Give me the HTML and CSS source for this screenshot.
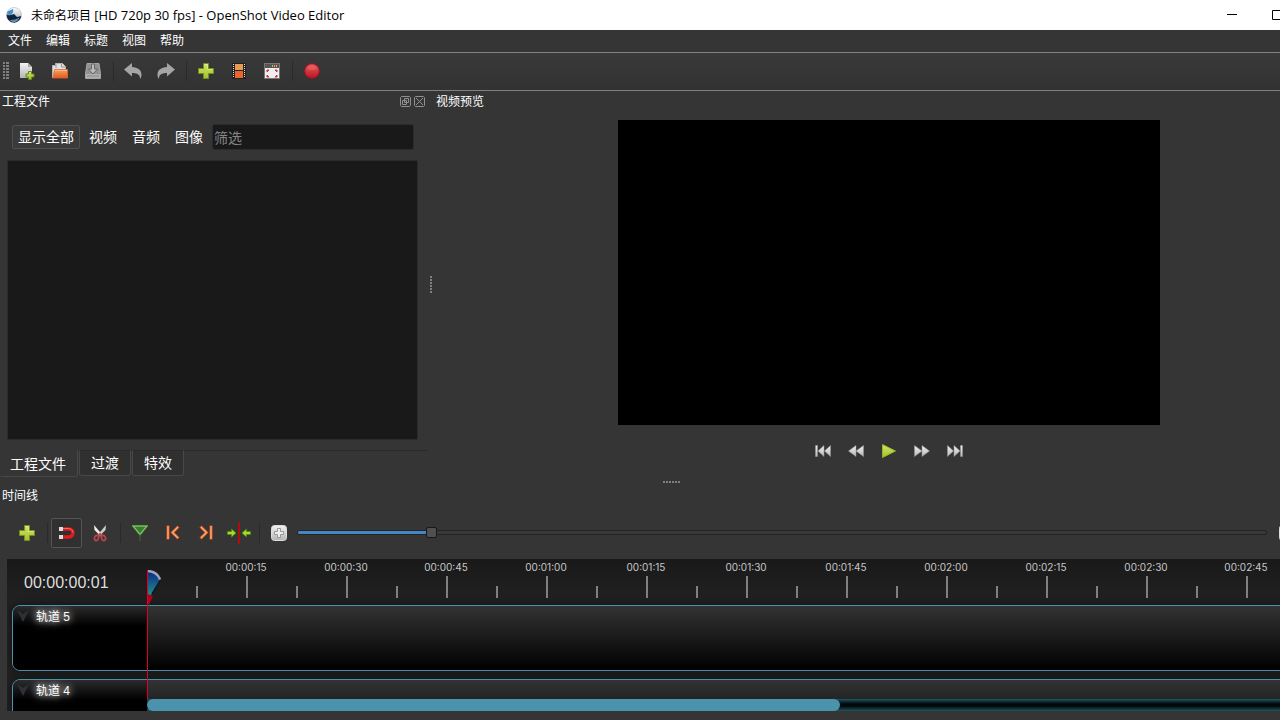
FILE: index.html
```
<!DOCTYPE html>
<html lang="zh-CN">
<head>
  <meta charset="UTF-8">
  <meta name="viewport" content="width=device-width, initial-scale=1.0">
  <title>OpenShot Video Editor</title>
  <link rel="stylesheet" href="styles.css">
</head>
<body>

<!-- Shared gradients and icons -->
<svg class="defs" width="0" height="0" aria-hidden="true">
  <defs>
    <linearGradient id="green" x1="0" y1="0" x2="0" y2="1"><stop offset="0" stop-color="#d3e56a"/><stop offset="1" stop-color="#a2c02c"/></linearGradient>
    <linearGradient id="orange" x1="0" y1="0" x2="0" y2="1"><stop offset="0" stop-color="#f0a860"/><stop offset="1" stop-color="#e9541c"/></linearGradient>
    <linearGradient id="silver" x1="0" y1="0" x2="0" y2="1"><stop offset="0" stop-color="#f2f2f2"/><stop offset="1" stop-color="#b5b5b5"/></linearGradient>
    <linearGradient id="red" x1="0" y1="0" x2="0" y2="1"><stop offset="0" stop-color="#ea5a56"/><stop offset="1" stop-color="#bd1328"/></linearGradient>
    <linearGradient id="blue" x1="0" y1="0" x2="0" y2="1"><stop offset="0" stop-color="#0a2a80"/><stop offset="1" stop-color="#1f8f90"/></linearGradient>
    <linearGradient id="sphere" x1="0" y1="0" x2="0" y2="1"><stop offset="0" stop-color="#ffffff"/><stop offset="1" stop-color="#9aa0a6"/></linearGradient>
    <symbol id="plus" viewBox="0 0 16 16"><path d="M5.5.5h5v5h5v5h-5v5h-5v-5h-5v-5h5z" fill="url(#green)" stroke="#71911c"/><path d="M6.5 1.5h3v5h5" fill="none" stroke="#e2ef90" stroke-opacity=".7"/></symbol>
  </defs>
</svg>

<div class="app">
  <header class="titlebar">
    <svg class="logo" width="16" height="16" viewBox="0 0 16 16">
      <circle cx="8" cy="8" r="7.500" fill="url(#sphere)" stroke="#aab0b6" stroke-width=".6"/>
      <path d="M.6 7.500Q4 9 8 7L11 10 15.200 9A7.400 7.400 0 0 1 2 12.500Q.6 10.500.6 7.500z" fill="#11233b"/>
      <path d="M1.500 4.500L7 2Q8 5 5 8L1 7.500z" fill="#3d8fd0"/>
      <path d="M3.500 13Q9 13.500 13.500 10.500Q12 14.500 8 15.200 5.500 15 3.500 13z" fill="#5d93bd"/>
    </svg>
    <h1>未命名项目 <span>[HD 720p 30 fps] - OpenShot Video Editor</span></h1>
    <div class="window-buttons">
      <button aria-label="最小化"><svg width="10" height="10"><path d="M0 4.500h10" stroke="#000"/></svg></button>
      <button aria-label="最大化"><svg width="10" height="10"><path d="M.5.5h9v9h-9z" fill="none" stroke="#000"/></svg></button>
      <button aria-label="关闭"><svg width="10" height="10"><path d="M0 0l10 10M10 0L0 10" stroke="#000"/></svg></button>
    </div>
  </header>

  <nav class="menubar">
    <button>文件</button>
    <button>编辑</button>
    <button>标题</button>
    <button>视图</button>
    <button>帮助</button>
  </nav>

  <div class="toolbar main-toolbar">
    <span class="handle"></span>
    <button class="tool" aria-label="新建项目">
      <svg width="16" height="18" viewBox="0 0 16 18"><path d="M1 1h8l4 4v11H1z" fill="url(#silver)"/><path d="M9 1v4h4z" fill="#aaa"/><path d="M9.500 9.500h3v2.500h2.500v3h-2.500v2.500h-3v-2.500H7v-3h2.500z" fill="url(#green)" stroke="#64851a"/></svg>
    </button>
    <button class="tool" aria-label="打开项目">
      <svg width="16" height="16" viewBox="0 0 16 16"><path d="M.5 15V2.500h3V.5h7l3 3V8" fill="#e0e0e0" stroke="#b5b5b5"/><path d="M4 1v4M9.500 1v3h3.500" fill="none" stroke="#999"/><path d="M2.500 6.500h13V15H1z" fill="url(#orange)" stroke="#e0683a" stroke-width=".8"/><path d="M3 7.500h12" stroke="#f8ba8e"/></svg>
    </button>
    <button class="tool" aria-label="保存项目">
      <svg width="16" height="16" viewBox="0 0 16 16"><path d="M2 .5h12l1.500 10v5H.5v-5z" fill="#929292" stroke="#a5a5a5"/><path d="M1 11h14v4H1z" fill="#b0b0b0"/><path d="M6.500 1h3v5h3L8 11 3.500 6h3z" fill="#bcbcbc" stroke="#666"/><path d="M2 13h12" stroke="#888"/></svg>
    </button>
    <span class="separator"></span>
    <button class="tool" aria-label="撤销">
      <svg width="18" height="16" viewBox="0 0 18 16"><path d="M0 6.500L8 0v4c6 .5 9.500 3 9.500 7.500 0 2-.7 3.500-1.500 4.500.3-4-2.500-6-8-6v3.500z" fill="#a5a5a5"/></svg>
    </button>
    <button class="tool" aria-label="重做">
      <svg width="18" height="16" viewBox="0 0 18 16"><path d="M18 6.500L10 0v4C4 4.500.5 7 .5 11.500c0 2 .7 3.500 1.500 4.500-.3-4 2.500-6 8-6v3.500z" fill="#a5a5a5"/></svg>
    </button>
    <span class="separator"></span>
    <button class="tool" aria-label="导入文件"><svg width="16" height="16"><use href="#plus"/></svg></button>
    <button class="tool" aria-label="选择配置">
      <svg width="14" height="16" viewBox="0 0 14 16"><path d="M0 0h14v16H0z" fill="#222"/><path d="M3 1h8v6H3z" fill="#e99a50"/><path d="M3 8h8v7H3z" fill="#e8682c"/><path d="M1.500 1v14M12.500 1v14" stroke="#ddd" stroke-dasharray="1 1"/></svg>
    </button>
    <button class="tool" aria-label="全屏">
      <svg width="16" height="16" viewBox="0 0 16 16"><path d="M.5.5h15v15H.5z" fill="#eee" stroke="#777"/><path d="M1 1h14v4H1z" fill="#565656"/><path d="M8 3h6" stroke="#e6ae54" stroke-width="2" stroke-dasharray="1 1"/><path d="M3 9V7h2zM11 7h2v2zM3 12v2h2zM13 12v2h-2z" fill="#c9343e" stroke="#c9343e"/></svg>
    </button>
    <span class="separator"></span>
    <button class="tool" aria-label="导出视频">
      <svg width="16" height="16" viewBox="0 0 16 16"><circle cx="8" cy="8" r="7.300" fill="url(#red)" stroke="#a51224"/><path d="M3 6a5.500 5 0 0 1 10 0Q8 8.500 3 6z" fill="#fff" opacity=".12"/></svg>
    </button>
  </div>

  <main class="docks">
    <section class="files-dock">
      <div class="dock-title">
        <h2>工程文件</h2>
        <button aria-label="浮动"><svg width="11" height="11" viewBox="0 0 11 11"><path d="M1.500.5h8l1 1v8l-1 1h-8l-1-1v-8z M4.500 2.500h4v4h-4z M2.500 4.500h4v4h-4z" fill="none" stroke="#909090"/></svg></button>
        <button aria-label="关闭面板"><svg width="11" height="11" viewBox="0 0 11 11"><path d="M1.500.5h8l1 1v8l-1 1h-8l-1-1v-8z M2 2l7 7M9 2l-7 7" fill="none" stroke="#909090"/></svg></button>
      </div>
      <div class="filters">
        <button class="filter active">显示全部</button>
        <button class="filter">视频</button>
        <button class="filter">音频</button>
        <button class="filter">图像</button>
        <input type="text" placeholder="筛选" aria-label="筛选">
      </div>
      <div class="file-list"></div>
      <div class="tabs">
        <button class="tab active">工程文件</button>
        <button class="tab">过渡</button>
        <button class="tab">特效</button>
      </div>
    </section>

    <div class="splitter vertical"><span></span></div>

    <section class="preview-dock">
      <div class="dock-title"><h2>视频预览</h2></div>
      <div class="stage"><div class="video"></div></div>
      <div class="playback">
        <button class="tool" aria-label="跳到开头"><svg width="16" height="12" viewBox="0 0 16 12"><path d="M.5.5h2v11h-2zM9 .5v11L3 6zM15.500.5v11L9.500 6z" fill="url(#silver)" stroke="#999" stroke-width=".5"/></svg></button>
        <button class="tool" aria-label="快退"><svg width="16" height="12" viewBox="0 0 16 12"><path d="M8 .5v11L.5 6zM15.500.5v11L8 6z" fill="url(#silver)" stroke="#999" stroke-width=".5"/></svg></button>
        <button class="tool" aria-label="播放"><svg width="14" height="14" viewBox="0 0 14 14"><path d="M.5.5L13.500 7 .5 13.500z" fill="url(#green)" stroke="#93b51e"/></svg></button>
        <button class="tool" aria-label="快进"><svg width="16" height="12" viewBox="0 0 16 12"><path d="M8 .5v11L15.500 6zM.5.5v11L8 6z" fill="url(#silver)" stroke="#999" stroke-width=".5"/></svg></button>
        <button class="tool" aria-label="跳到结尾"><svg width="16" height="12" viewBox="0 0 16 12"><path d="M13.500.5h2v11h-2zM7 .5v11L13 6zM.5.5v11L6.500 6z" fill="url(#silver)" stroke="#999" stroke-width=".5"/></svg></button>
      </div>
    </section>
  </main>

  <div class="splitter horizontal"><span></span></div>

  <section class="timeline-dock">
    <div class="dock-title"><h2>时间线</h2></div>

    <div class="toolbar timeline-toolbar">
      <button class="tool" aria-label="添加轨道"><svg width="16" height="16"><use href="#plus"/></svg></button>
      <span class="separator"></span>
      <button class="tool pressed" aria-label="启用吸附">
        <svg width="16" height="12" viewBox="0 0 16 12"><path d="M0 2h10a4 4 0 0 1 0 8H0" fill="none" stroke="#df1c20" stroke-width="3.500"/><path d="M0 1.500h9a4.500 4.500 0 0 1 5 4" fill="none" stroke="#f66" stroke-width="1"/><path d="M0 0h4v4H0zM0 8h4v4H0z" fill="#ddd"/></svg>
      </button>
      <button class="tool" aria-label="剃刀工具">
        <svg width="14" height="18" viewBox="0 0 14 18"><path d="M1 1l8.500 10-1.500 1.500L1.500 6z" fill="#eee"/><path d="M13 1L4.500 11l1.500 1.500L12.500 6z" fill="#ccc"/><g fill="none" stroke="#b8434a" stroke-width="1.800"><ellipse cx="3.500" cy="14" rx="1.900" ry="2.600" transform="rotate(25 3.500 14)"/><ellipse cx="10.500" cy="14" rx="1.900" ry="2.600" transform="rotate(-25 10.500 14)"/><path d="M5 12l2-2 2 2"/></g></svg>
      </button>
      <span class="separator"></span>
      <button class="tool" aria-label="添加标记">
        <svg width="16" height="16" viewBox="0 0 16 16"><path d="M1 1h14L8 9.500z" fill="#347f2f" stroke="#78bd59" stroke-width="1.500"/><path d="M8 9v7" stroke="#3f6f2d"/></svg>
      </button>
      <button class="tool" aria-label="上一个标记">
        <svg width="14" height="15" viewBox="0 0 14 15"><path d="M2 .5v14M12.500 1.500L6.500 7.500l6 6" fill="none" stroke="#d4531c" stroke-width="3"/><path d="M2 1v13M12 2L6.500 7.500 12 13" fill="none" stroke="#f5b07c" stroke-width="1.400"/></svg>
      </button>
      <button class="tool" aria-label="下一个标记">
        <svg width="14" height="15" viewBox="0 0 14 15"><path d="M12 .5v14M1.500 1.500l6 6-6 6" fill="none" stroke="#d4531c" stroke-width="3"/><path d="M12 1v13M2 2l5.500 5.500L2 13" fill="none" stroke="#f5b07c" stroke-width="1.400"/></svg>
      </button>
      <button class="tool" aria-label="播放头居中">
        <svg width="24" height="22" viewBox="0 0 24 22"><path d="M12 0v22" stroke="#b00d0d" stroke-width="2"/><path d="M.5 9.500h4V7L9 11l-4.500 4v-2.500h-4zM23.500 9.500h-4V7L15 11l4.500 4v-2.500h4z" fill="#a6dc24" stroke="#4d8a10" stroke-width=".7"/></svg>
      </button>
      <span class="separator"></span>
      <button class="tool" aria-label="放大">
        <svg width="16" height="16" viewBox="0 0 16 16"><rect x=".5" y=".5" width="15" height="15" rx="3" fill="url(#silver)" stroke="#ddd"/><path d="M6.500 3.500h3v3h3v3h-3v3h-3v-3h-3v-3h3z" fill="#eee" stroke="#999"/></svg>
      </button>
      <input class="zoom" type="range" min="0" max="1000" value="134" aria-label="缩放">
      <button class="tool" aria-label="缩小">
        <svg width="16" height="16" viewBox="0 0 16 16"><rect x=".5" y=".5" width="15" height="15" rx="3" fill="url(#silver)" stroke="#ddd"/><path d="M3.500 6.500h9v3h-9z" fill="#eee" stroke="#999"/></svg>
      </button>
    </div>

    <div class="timeline">
      <div class="ruler-row">
        <div class="timecode">00:00:00:01</div>
        <div class="ruler">
          <span>00:00:15</span>
          <span>00:00:30</span>
          <span>00:00:45</span>
          <span>00:01:00</span>
          <span>00:01:15</span>
          <span>00:01:30</span>
          <span>00:01:45</span>
          <span>00:02:00</span>
          <span>00:02:15</span>
          <span>00:02:30</span>
          <span>00:02:45</span>
        </div>
      </div>
      <div class="track">
        <div class="track-name">
          <svg width="14" height="14" viewBox="0 0 14 14"><path d="M1 1l6 4 6-4-6 12z" fill="#2c3238"/></svg>
          <span>轨道 5</span>
        </div>
        <div class="track-lane"></div>
      </div>
      <div class="track">
        <div class="track-name">
          <svg width="14" height="14" viewBox="0 0 14 14"><path d="M1 1l6 4 6-4-6 12z" fill="#2c3238"/></svg>
          <span>轨道 4</span>
        </div>
        <div class="track-lane"></div>
      </div>
      <div class="playhead">
        <svg width="13" height="35" viewBox="0 0 13 35"><path d="M0 1Q9 1 12 10L3 25H0z" fill="url(#blue)"/><path d="M12.500 10L4 24" stroke="#101820" stroke-width="1.500"/><path d="M0 1Q9 1.500 12 9.500" fill="none" stroke="#a0a2b8" stroke-width="2.500"/><path d="M0 24l5 2-3.500 8H0z" fill="#b00020"/></svg>
      </div>
      <div class="scrollbar"><span></span></div>
    </div>
  </section>
</div>

</body>
</html>
```

FILE: styles.css
```
* {
  margin: 0;
  padding: 0;
  box-sizing: border-box;
}
body {
  font-family: "Open Sans", "Noto Sans CJK SC", sans-serif;
  font-size: 12px;
  line-height: 16px;
  color: #fff;
  background: #353535;
  overflow: hidden;
}
button {
  font: inherit;
  color: inherit;
  background: none;
  border: none;
}
svg {
  display: block;
}
h1, h2 {
  font-size: 12px;
  font-weight: 400;
}
.defs {
  position: absolute;
}

/* the window runs past the right edge of the screen */
.app {
  display: flex;
  flex-direction: column;
  width: calc(100% + 64px);
  height: 100vh;
}

/* Title bar and menu */
.titlebar {
  display: flex;
  align-items: center;
  height: 30px;
  padding-left: 6px;
  gap: 9px;
  background: #fff;
  color: #000;
}
.titlebar h1 span {
  font-size: 13px;
}
.window-buttons {
  display: flex;
  margin-left: auto;
}
.window-buttons button {
  display: flex;
  justify-content: center;
  width: 45px;
}
.menubar {
  display: flex;
  align-items: center;
  height: 23px;
  padding-left: 8px;
  gap: 14px;
  border-bottom: 1px solid #808080;
}

/* Toolbars */
.toolbar {
  display: flex;
  align-items: center;
}
.main-toolbar {
  height: 38px;
  padding-bottom: 1px;
  border-bottom: 1px solid #808080;
  background: linear-gradient(#393939, #323232);
}
.handle {
  width: 6px;
  height: 18px;
  margin: 0 1px 0 3px;
  background: conic-gradient(#353535 25%, #353535 0 50%, #353535 0 75%, #808080 0) 0 0 / 3px 3px;
  background: linear-gradient(#353535, #353535) 2px 0 / 1px 100% no-repeat, repeating-linear-gradient(#808080 0 2px, #353535 2px 3px);
}
.tool {
  display: flex;
  flex: none;
  align-items: center;
  justify-content: center;
  width: 33px;
  height: 30px;
}
.pressed {
  border: 1px solid #555;
  border-radius: 2px;
  background: #303030;
  width: 31px;
  margin: 0 1px;
}
.separator {
  width: 7px;
  height: 20px;
  background: linear-gradient(#2a2a2a, #2a2a2a) 4px 0 / 1px 100% no-repeat;
}

/* Docks */
.docks {
  display: flex;
  flex: 1;
  min-height: 0;
}
.dock-title {
  display: flex;
  align-items: center;
  height: 21px;
  padding: 0 3px 0 2px;
  gap: 3px;
}
.dock-title h2 {
  flex: 1;
}
.files-dock {
  display: flex;
  flex-direction: column;
  width: 428px;
  font-size: 14px;
}
.filters {
  display: flex;
  align-items: center;
  gap: 3px;
  padding: 12px 14px 10px 12px;
}
.filter {
  height: 24px;
  padding: 0 5px;
  border: 1px solid transparent;
  border-radius: 2px;
  line-height: 22px;
}
.filter.active {
  border-color: #505050;
  background: #3a3a3a;
}
.filters input {
  flex: 1;
  min-width: 0;
  height: 26px;
  padding: 0 1px;
  border: 1px solid #2b2b2b;
  border-radius: 3px;
  background: #191919;
  color: #fff;
  font: inherit;
}
.filters input::placeholder {
  color: #858585;
}
.file-list {
  flex: 1;
  margin: 0 10px 10px 7px;
  border: 1px solid #2b2b2b;
  background: #191919;
}
.tabs {
  display: flex;
  align-items: flex-start;
  gap: 1px;
  height: 29px;
  background: linear-gradient(#2a2a2a, #2a2a2a) 0 0 / 100% 1px no-repeat;
}
.tab {
  height: 26px;
  padding: 0 11px;
  border: 1px solid #484848;
  border-top-color: #2a2a2a;
  border-radius: 0 0 3px 3px;
  background: #303030;
}
.tab.active {
  height: 27px;
  padding: 2px 11px 0 10px;
  border-left: none;
  border-top: none;
  background: #353535;
}
.splitter {
  display: flex;
  align-items: center;
  justify-content: center;
}
.vertical {
  width: 6px;
}
.vertical span {
  width: 2px;
  height: 18px;
  background: repeating-linear-gradient(#808080 0 2px, #353535 2px 3px);
}
.horizontal {
  height: 6px;
}
.horizontal span {
  width: 18px;
  height: 2px;
  background: repeating-linear-gradient(90deg, #808080 0 2px, #353535 2px 3px);
}
.preview-dock {
  display: flex;
  flex: 1;
  flex-direction: column;
  min-width: 0;
}
.stage {
  display: flex;
  flex: 1;
  justify-content: center;
  min-height: 0;
  margin-top: 8px;
}
.video {
  height: 100%;
  aspect-ratio: 16 / 9;
  background: #000;
}
.playback {
  display: flex;
  align-items: center;
  justify-content: center;
  height: 51px;
  margin-bottom: 3px;
}

/* Timeline */
.timeline-dock {
  padding-bottom: 9px;
}
.timeline-toolbar {
  height: 53px;
  padding: 0 41px 0 10px;
}
.zoom {
  appearance: none;
  flex: 1;
  height: 17px;
  margin: 0 3px 0 2px;
  background: none;
}
.zoom::-webkit-slider-runnable-track {
  height: 5px;
  border: 1px solid #252525;
  border-radius: 2px;
  background: linear-gradient(#4486c4, #4486c4) 0 0 / 14% 100% no-repeat #393939;
}
.zoom::-webkit-slider-thumb {
  appearance: none;
  width: 11px;
  height: 11px;
  margin-top: -4px;
  border: 1px solid #181818;
  border-radius: 2px;
  background: #505050;
}
.timeline {
  position: relative;
  height: 152px;
  margin-left: 7px;
  overflow: hidden;
  background: #212121;
  font-family: "Liberation Sans", "Noto Sans CJK SC", sans-serif;
}
.ruler-row {
  display: flex;
  height: 46px;
  background: linear-gradient(#191919, #222);
}
.timecode {
  width: 189px;
  padding: 14px 0 0 17px;
  color: #ddd;
  font-size: 16px;
  line-height: 20px;
}
.ruler {
  display: flex;
}
.ruler span {
  width: 100px;
  height: 39px;
  color: #c8c8c8;
  font-family: Inter, sans-serif;
  font-size: 10px;
  text-align: center;
  background:
    linear-gradient(#808080, #808080) 0 100% / 2px 12px no-repeat,
    linear-gradient(#808080, #808080) 50px 100% / 2px 22px no-repeat;
}
.track {
  display: flex;
  height: 66px;
  margin: 0 0 8px 5px;
  border: 1px solid #4b92ad;
  border-radius: 8px;
  overflow: hidden;
  box-shadow: 0 0 8px #111;
}
.track-name {
  display: flex;
  gap: 6px;
  width: 134px;
  padding: 3px 0 0 3px;
  background: linear-gradient(#2b2b2b, #000 20px);
  text-shadow: 0 0 10px #fff, 0 0 6px #999;
}
.track-lane {
  flex: 1;
  background: linear-gradient(#333, #000);
}
/* playhead and scrollbar lie over the tracks */
.playhead {
  position: absolute;
  top: 11px;
  bottom: 12px;
  left: 140px;
  border-left: 1px solid #e00025;
}
.scrollbar {
  position: absolute;
  right: 0;
  bottom: 0;
  left: 140px;
  height: 12px;
  background: linear-gradient(#1f5664, #03090b 40%, #03090b 60%, #1f5664);
}
.scrollbar span {
  display: block;
  width: 693px;
  height: 12px;
  border-radius: 6px;
  background: #4b92ad;
}
```
